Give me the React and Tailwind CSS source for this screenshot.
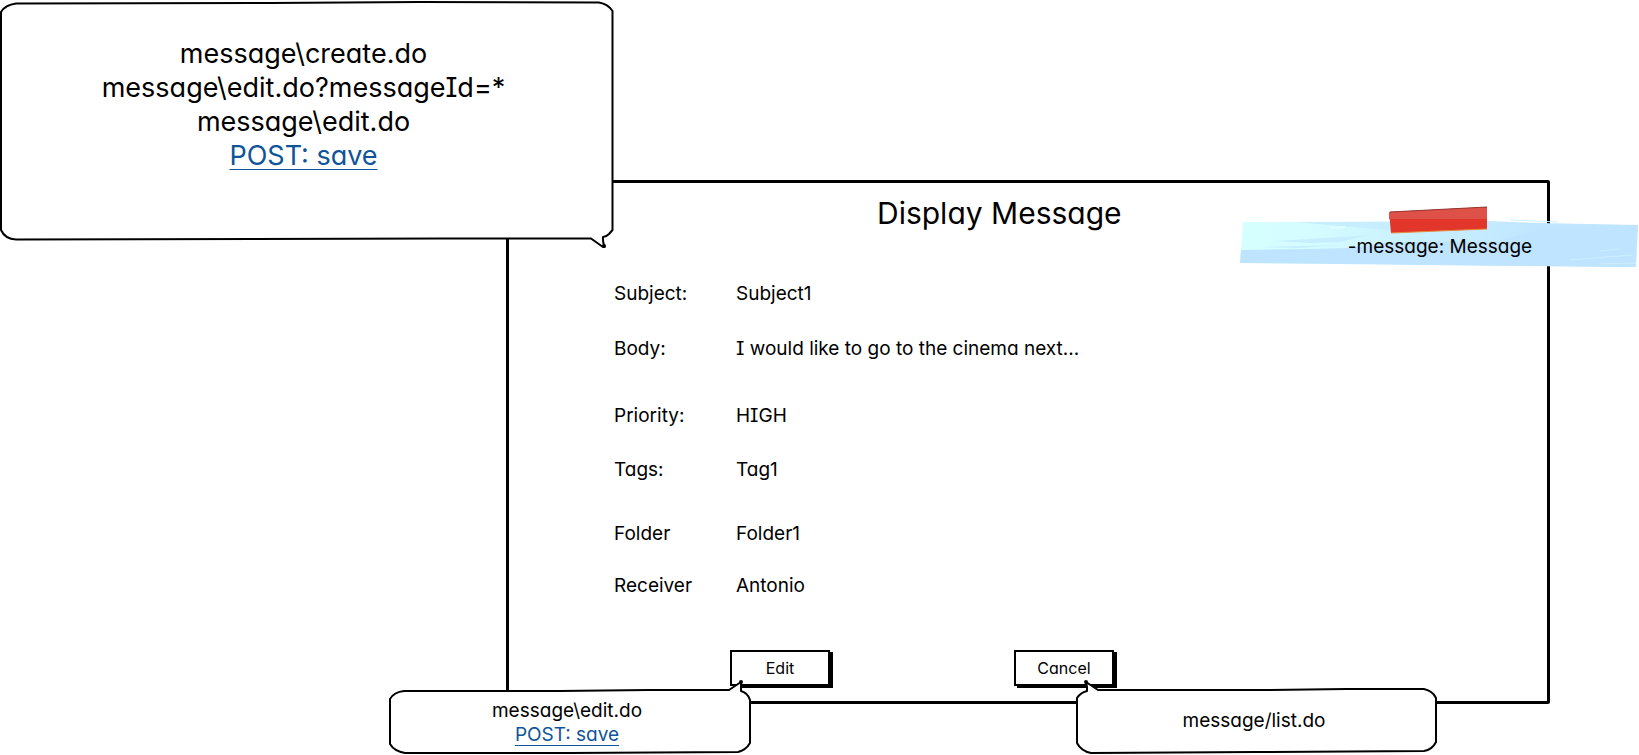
const rows = [
  { label: "Subject:", value: "Subject1", space: "pb-[31px]" },
  { label: "Body:", value: "I would like to go to the cinema next...", space: "pb-[43px]" },
  { label: "Priority:", value: "HIGH", space: "pb-[30px]" },
  { label: "Tags:", value: "Tag1", space: "pb-10" },
  { label: "Folder", value: "Folder1", space: "pb-7" },
  { label: "Receiver", value: "Antonio", space: "pb-0" },
];

function SaveLink() {
  return (
    <a
      href="#save"
      className="text-[#0f5499] underline decoration-1 underline-offset-4"
    >
      POST: save
    </a>
  );
}

function CreateOutline() {
  return (
    <svg
      viewBox="0 0 615 250"
      className="absolute left-0 top-0 h-[250px] w-[615px]"
      aria-hidden="true"
    >
      <path
        d="M16 3.5 L270 3 L420 2 L599 2.5 Q608 4 612.5 11 L612.5 230 L609 234 Q606 237 603 237 Q602.5 241 604.5 247 L603 247 L591 238.5 L440 238.5 L16 239.5 Q5 239 1 230 L1 12 Q5 5 16 3.5 Z"
        fill="#fff"
        stroke="#000"
        strokeWidth="2"
        strokeLinejoin="round"
      />
      <circle cx="604" cy="246" r="2" />
    </svg>
  );
}

function EditOutline() {
  return (
    <svg
      viewBox="0 0 364 76"
      className="absolute left-0 top-0 h-[76px] w-[364px]"
      aria-hidden="true"
    >
      <path
        d="M15 12 L170 12 L260 11 L340 11 L352 3 L352 12 Q359 14 361 21 L361 64 Q357 71 349 73 L180 74 L16 74 Q5 72 1 65 L1 20 Q5 13 15 12 Z"
        fill="#fff"
        stroke="#000"
        strokeWidth="2"
        strokeLinejoin="round"
      />
      <circle cx="352" cy="3" r="2" />
    </svg>
  );
}

function CancelOutline() {
  return (
    <svg
      viewBox="0 0 364 76"
      className="absolute left-0 top-0 h-[76px] w-[364px]"
      aria-hidden="true"
    >
      <path
        d="M22 11 L190 11 L270 10 L348 10 Q357 12 360 19 L360 63 Q356 71 348 72 L180 73 L15 74 Q5 72 1 64 L1 19 Q4 14 11 12 L11 8 L10 3 Z"
        fill="#fff"
        stroke="#000"
        strokeWidth="2"
        strokeLinejoin="round"
      />
      <circle cx="10" cy="3" r="2" />
    </svg>
  );
}

function Tape() {
  return (
    <svg
      viewBox="0 0 400 64"
      className="absolute left-0 top-0 h-16 w-[400px]"
      aria-hidden="true"
    >
      <defs>
        <linearGradient id="tape" x1="0" x2="1" y1="0" y2="0">
          <stop offset="0" stopColor="#d6ffff" />
          <stop offset="0.2" stopColor="#d4fbff" />
          <stop offset="0.45" stopColor="#c8f0ff" />
          <stop offset="0.75" stopColor="#c0e6ff" />
          <stop offset="1" stopColor="#bfe4ff" />
        </linearGradient>
      </defs>
      <path d="M3 16 L248 15 L300 17 L398 19 L396 61 L300 60 L190 59 L130 58 L0 57 L1 43 Z" fill="url(#tape)" />
      <path d="M1 44 L70 43 L110 42 L150 36 L396 34 L396 61 L190 59 L0 57 Z" fill="#bfe4ff" />
      <path d="M260 34 L300 24 L398 20 L396 40 Z" fill="#bfe4ff" />
      <path d="M56 16 L150 16 L150 24 L100 20 Z M34 35 L70 33 L130 29 L100 36 L70 37 Z M20 41 L100 39 L60 42 Z" fill="#c6eeff" />
      <path d="M90 21 L106 20 L104 22 L90 23 Z" fill="#e2ffff" />
      <path d="M330 54 L392 49 M360 58 L396 57 M270 14 L318 16 M360 45 L380 43" fill="none" stroke="#cdf0ff" strokeWidth="1" />
      <path d="M149 6 L247 1 L247 23 L151 27 Z" fill="#e2362a" />
      <path d="M149 6 L247 1 L247 13 L149 13 Z" fill="#dd5148" />
      <path d="M150 6 L247 1" fill="none" stroke="#963832" strokeWidth="1" />
      <path d="M151 27 L247 23" fill="none" stroke="#e98a3a" strokeWidth="1" />
    </svg>
  );
}

function SketchButton({ children }) {
  return (
    <button
      type="button"
      className="block h-9 w-[100px] border-2 border-black bg-white text-base leading-6 shadow-[3px_2px_0_#000]"
    >
      {children}
    </button>
  );
}

export default function App() {
  return (
    <main className="relative min-h-screen overflow-x-clip bg-white pl-[506px] pr-[89px] pt-[180px] font-['Inter',sans-serif] text-[19px] font-normal text-black [font-feature-settings:'cv11','cv08']">
      <section className="relative rounded-xs border-[3px] border-black">
        <h1 className="ml-[368px] mt-2.5 text-[30px] leading-10 whitespace-nowrap">
          Display Message
        </h1>

        <dl className="ml-[105px] mt-[49px]">
          {rows.map((row) => (
            <div key={row.label} className={`flex leading-6 ${row.space}`}>
              <dt className="w-[122px]">{row.label}</dt>
              <dd className="whitespace-nowrap">{row.value}</dd>
            </div>
          ))}
        </dl>

        <div className="ml-[221px] mt-[52px] flex gap-[184px] pb-[15px]">
          <div className="relative">
            <SketchButton>Edit</SketchButton>
            <div className="absolute left-[-341px] top-[29px] h-[76px] w-[364px]">
              <EditOutline />
              <p className="relative pr-2 pt-5 text-center leading-6 whitespace-nowrap">
                message\edit.do
                <br />
                <SaveLink />
              </p>
            </div>
          </div>
          <div className="relative">
            <SketchButton>Cancel</SketchButton>
            <div className="absolute left-[62px] top-[29px] h-[76px] w-[364px]">
              <CancelOutline />
              <p className="relative pr-2 pt-[30px] text-center leading-6 whitespace-nowrap">
                message/list.do
              </p>
            </div>
          </div>
        </div>

        <aside className="absolute right-[-93px] top-[23px] h-16 w-[400px]">
          <Tape />
          <p className="relative pt-[29px] text-center leading-6">-message: Message</p>
        </aside>
      </section>

      <aside className="absolute left-0 top-0 h-[250px] w-[615px]">
        <CreateOutline />
        <p className="relative pr-2 pt-[37px] text-center text-[27px] leading-[34px]">
          message\create.do
          <br />
          message\edit.do?messageId=*
          <br />
          message\edit.do
          <br />
          <SaveLink />
        </p>
      </aside>
    </main>
  );
}
